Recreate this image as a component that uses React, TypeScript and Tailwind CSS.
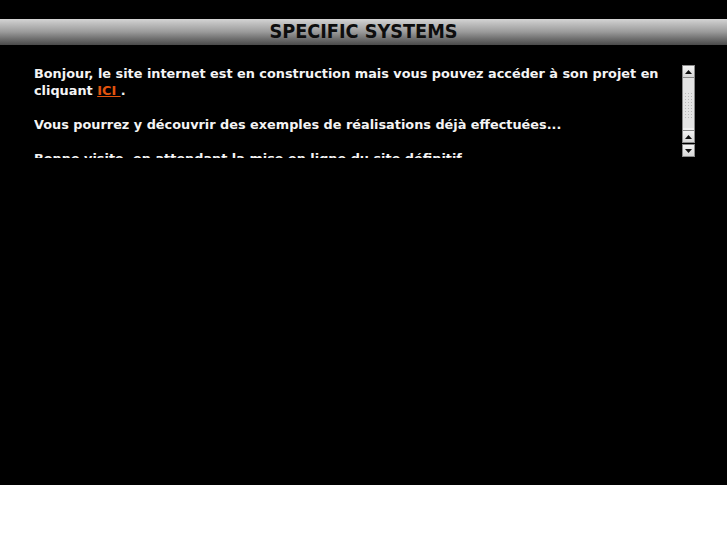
import React from "react";

function Arrow({ down }: { down?: boolean }) {
    return (
        <div className="h-[13px] w-[13px] border border-[#8a8a8a] bg-gradient-to-b from-[#f4f4f4] to-[#d8d8d8] flex items-center justify-center">
            <svg width="7" height="4" viewBox="0 0 7 4">
                <path d={down ? "M0 0 L7 0 L3.5 4 Z" : "M0 4 L7 4 L3.5 0 Z"} fill="#111" />
            </svg>
        </div>
    );
}

export default function App() {
    return (
        <div className="w-full">
            <div className="h-[485px] bg-black pt-[19px]">
                <div className="h-[26px] bg-gradient-to-b from-[#d4d4d4] via-[#9a9a9a] to-[#4a4a4a] flex items-center justify-center">
                    <span className="text-[#0d0d0d] font-bold text-[19.7px] leading-none" style={{ fontFamily: '"DejaVu Sans Condensed", "DejaVu Sans", sans-serif' }}>
                        SPECIFIC SYSTEMS
                    </span>
                </div>
                <div className="flex mt-[20px] pl-[34px]">
                    <div className="w-[640px] h-[93px] overflow-hidden text-[#f4f4f4] font-bold text-[12.85px] leading-[17px]" style={{ fontFamily: '"DejaVu Sans", sans-serif' }}>
                        Bonjour, le site internet est en construction mais vous pouvez accéder à son projet en cliquant{" "}
                        <a href="#" className="text-[#e2540e] underline">ICI </a>.
                        <br />
                        <br />
                        Vous pourrez y découvrir des exemples de réalisations déjà effectuées...
                        <br />
                        <br />
                        Bonne visite, en attendant la mise en ligne du site définitif.
                    </div>
                    <div className="ml-[8px] mt-0 w-[13px] flex flex-col">
                        <Arrow />
                        <div className="h-[50px] border-x border-[#8a8a8a] bg-[#e4e4e4] flex justify-center pt-[14px]">
                            <div className="w-[9px] h-[26px] bg-[radial-gradient(#b8b8b8_0.6px,transparent_0.8px)] bg-[length:3px_3px]" />
                        </div>
                        <div className="h-[2px] bg-[#f0f0f0] border-x border-[#8a8a8a]" />
                        <Arrow />
                        <div className="h-px" />
                        <Arrow down />
                    </div>
                </div>
            </div>
            <div className="h-[60px] bg-white" />
        </div>
    );
}
